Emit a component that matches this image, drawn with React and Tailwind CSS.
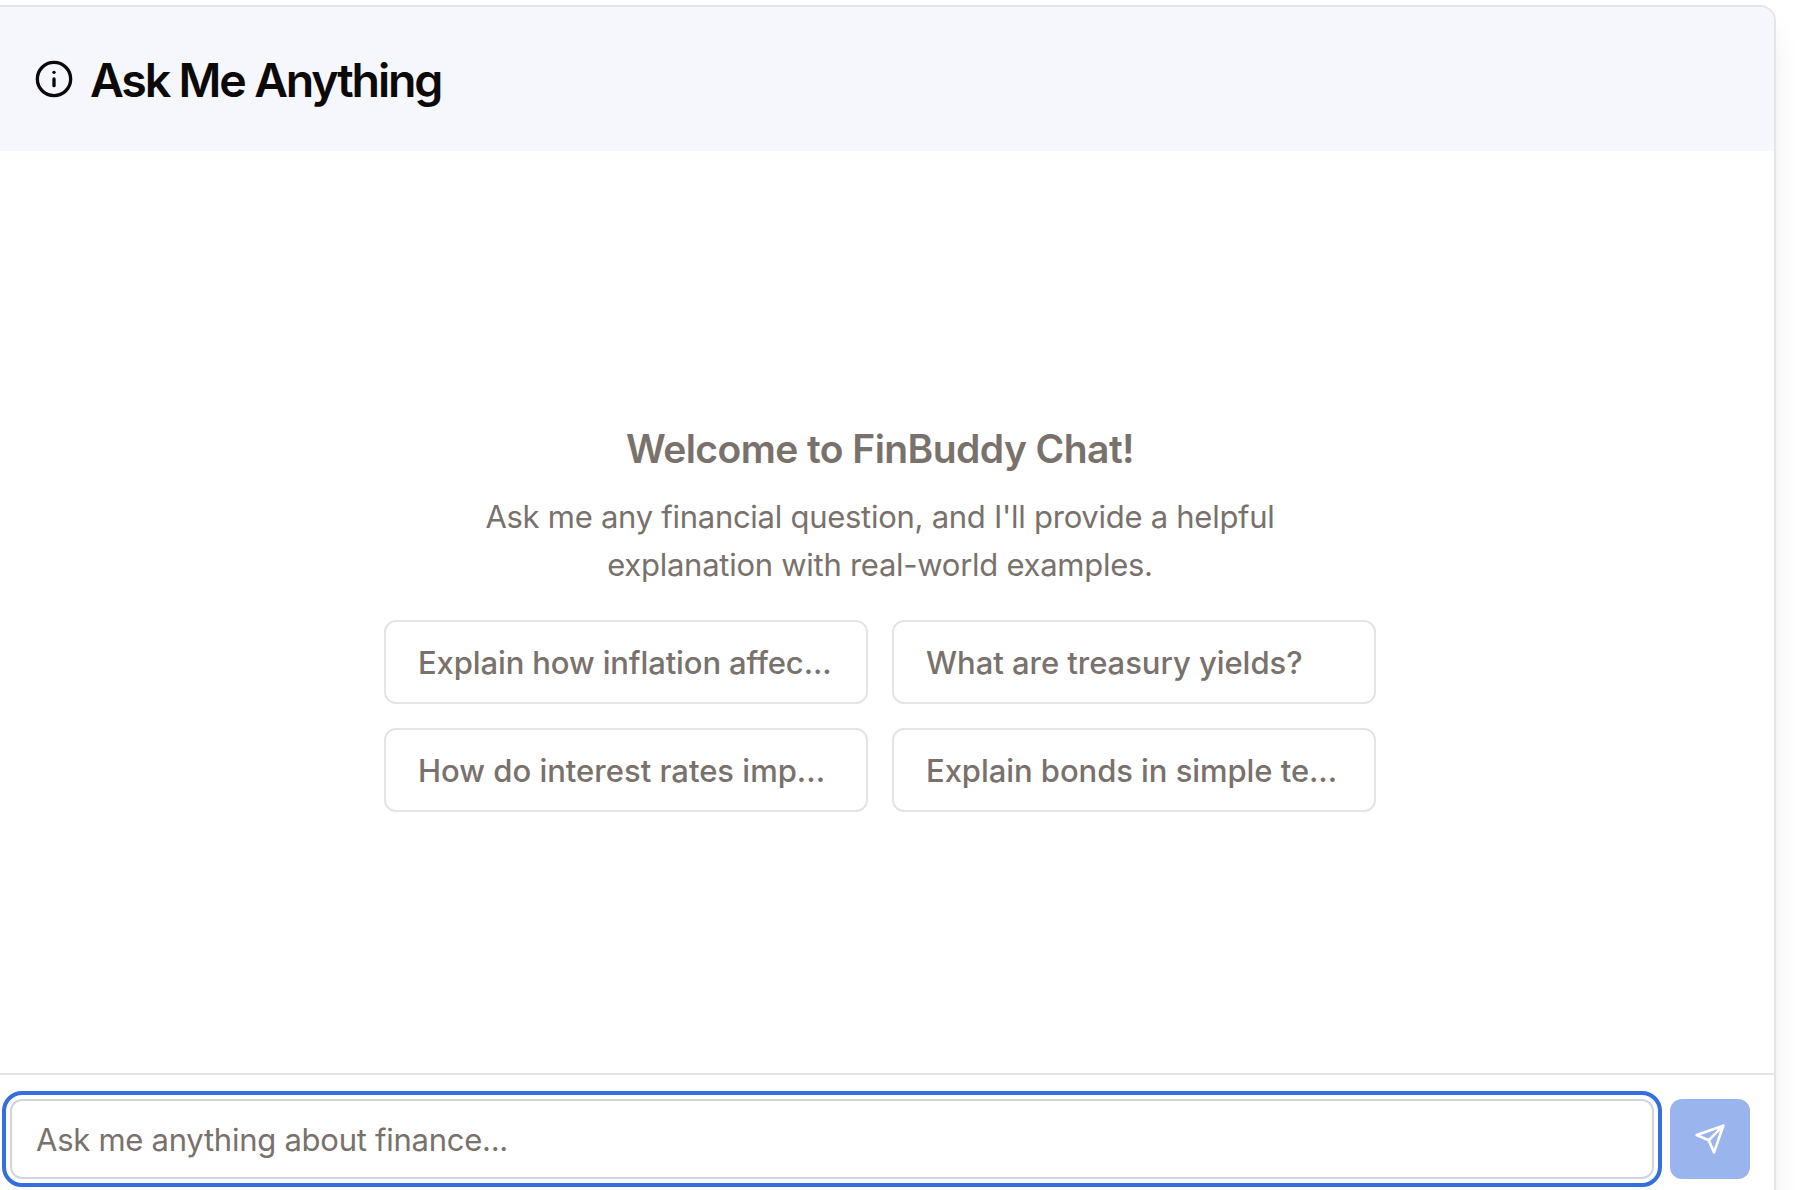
import { Info } from "lucide-react";

const suggestions = [
  { text: "Explain how inflation affec...", tracking: "tracking-[-0.12px]" },
  { text: "What are treasury yields?", tracking: "tracking-[-0.04px]" },
  { text: "How do interest rates imp...", tracking: "tracking-[0px]" },
  { text: "Explain bonds in simple te...", tracking: "tracking-[-0.06px]" },
];

function SendIcon() {
  return (
    <svg className="size-8" viewBox="0 0 24 24" fill="none" stroke="currentColor" strokeWidth="2" strokeLinecap="round" strokeLinejoin="round">
      <path d="m22 2-7 20-4-9-9-4Z" />
      <path d="M22 2 11 13" />
    </svg>
  );
}

export default function App() {
  return (
    <div className="h-[1190px] w-[1810px] overflow-hidden bg-white pt-[5px] font-['Inter',sans-serif]">
      <div className="-ml-4 flex h-[1220px] w-[1792px] flex-col overflow-hidden rounded-2xl border-2 border-[#e7e5e4] bg-white shadow-[0_20px_30px_-6px_rgba(0,0,0,0.1),0_8px_12px_-8px_rgba(0,0,0,0.1)]">
        <header className="flex h-36 shrink-0 items-center bg-[#f5f7fd] pl-12 text-[#0c0a09]">
          <Info className="size-10" strokeWidth={2} />
          <h1 className="ml-4 whitespace-nowrap pt-0.5 text-[46.5px] font-semibold leading-[48px] tracking-[-2.17px]">Ask Me Anything</h1>
        </header>
        <main className="flex h-[922px] shrink-0 flex-col items-center pt-[270px] text-[#78716c]">
          <h2 className="whitespace-nowrap text-[39px] font-semibold leading-[56px] tracking-[-0.56px]">Welcome to FinBuddy Chat!</h2>
          <p className="mt-4 whitespace-nowrap text-center text-[31px] leading-[48px] tracking-[-0.27px]">
            Ask me any financial question, and I'll provide a helpful
            <br />
            explanation with real-world examples.
          </p>
          <div className="mt-[31px] grid w-[992px] grid-cols-2 gap-6">
            {suggestions.map(({ text, tracking }) => (
              <button key={text} className="flex h-[84px] items-center rounded-xl border-2 border-[#e5e5e5] bg-white pl-8 pt-0.5 text-[31px] font-medium">
                <span className={`whitespace-nowrap ${tracking}`}>{text}</span>
              </button>
            ))}
          </div>
        </main>
        <footer className="flex shrink-0 gap-4 border-t-2 border-[#e5e5e5] pl-6 pt-6">
          <input
            className="h-20 w-[1644px] rounded-xl border-2 border-[#d1d5db] bg-white px-6 text-[31px] tracking-[-0.26px] text-[#78716c] outline-4 outline-offset-4 outline-[#346ee0] placeholder:text-[#78716c] placeholder:opacity-100"
            placeholder="Ask me anything about finance..."
            readOnly
          />
          <button className="flex size-20 items-center justify-center rounded-xl bg-[#9ab5ee] text-white">
            <SendIcon />
          </button>
        </footer>
      </div>
    </div>
  );
}
